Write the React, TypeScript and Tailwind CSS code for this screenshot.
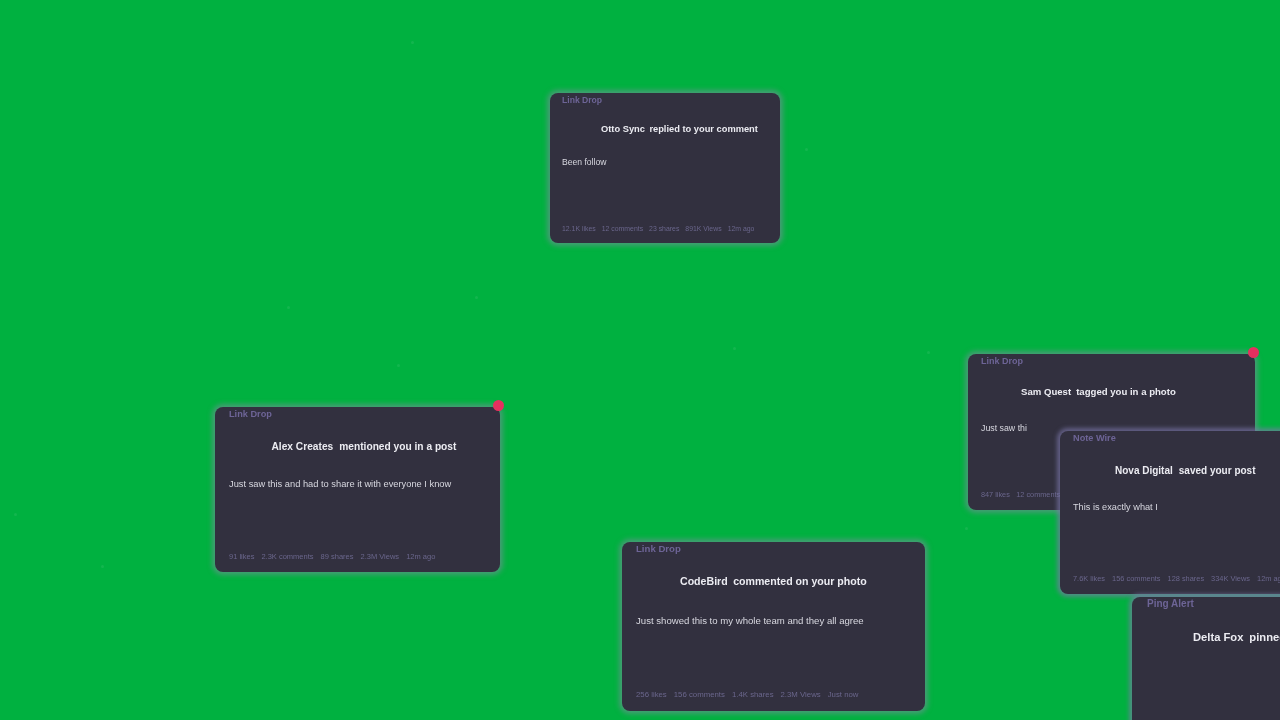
const cards = [
  {
    box: "left-[550px] top-[93px] w-[230px] h-[150px] z-10 shadow-[0_0_5px_3px_rgba(140,138,170,0.5)] px-3",
    brand: "Link Drop",
    brandCls: "text-[8.6px] h-[14px]",
    name: "Otto Sync",
    action: "replied to your comment",
    titleCls: "text-[9.3px] mt-[15px] pl-[39px] gap-[4.5px]",
    body: "Been follow",
    bodyCls: "text-[8.6px] mt-[19px]",
    meta: ["12.1K likes", "12 comments", "23 shares", "891K Views", "12m ago"],
    metaCls: "text-[6.9px] bottom-[9px] left-3 gap-[6px]",
    dot: false,
  },
  {
    box: "left-[215px] top-[407px] w-[285px] h-[165px] z-10 shadow-[0_0_5px_3px_rgba(140,138,170,0.5)] px-[14px]",
    brand: "Link Drop",
    brandCls: "text-[9.2px] h-[16px]",
    name: "Alex Creates",
    action: "mentioned you in a post",
    titleCls: "text-[10.2px] mt-[16.5px] pl-[42.5px] gap-[6px]",
    body: "Just saw this and had to share it with everyone I know",
    bodyCls: "text-[9.3px] mt-[23.5px]",
    meta: ["91 likes", "2.3K comments", "89 shares", "2.3M Views", "12m ago"],
    metaCls: "text-[7.5px] bottom-[10px] left-[14px] gap-[7px]",
    dot: true,
  },
  {
    box: "left-[622px] top-[542px] w-[303px] h-[169px] z-10 shadow-[0_0_5px_3px_rgba(140,138,170,0.5)] px-[14px]",
    brand: "Link Drop",
    brandCls: "text-[9.6px] h-[16px]",
    name: "CodeBird",
    action: "commented on your photo",
    titleCls: "text-[10.6px] mt-[16px] pl-[44px] gap-[5.5px]",
    body: "Just showed this to my whole team and they all agree",
    bodyCls: "text-[9.6px] mt-[26px]",
    meta: ["256 likes", "156 comments", "1.4K shares", "2.3M Views", "Just now"],
    metaCls: "text-[7.8px] bottom-[10px] left-[14px] gap-[7px]",
    dot: false,
  },
  {
    box: "left-[968px] top-[354px] w-[287px] h-[156px] z-10 shadow-[0_0_5px_3px_rgba(140,138,170,0.5)] px-[13px]",
    brand: "Link Drop",
    brandCls: "text-[9px] h-[15px]",
    name: "Sam Quest",
    action: "tagged you in a photo",
    titleCls: "text-[9.6px] mt-[15.5px] pl-[40px] gap-[5px]",
    body: "Just saw thi",
    bodyCls: "text-[8.8px] mt-[22px]",
    meta: ["847 likes", "12 comments", "23 shares", "891K Views", "12m ago"],
    metaCls: "text-[7.3px] bottom-[9px] left-[13px] gap-[6.5px]",
    dot: true,
  },
  {
    box: "left-[1060px] top-[431px] w-[300px] h-[163px] z-20 shadow-[0_0_4px_3px_rgba(125,120,170,0.65)] px-[13px]",
    brand: "Note Wire",
    brandCls: "text-[9.2px] h-[16px]",
    name: "Nova Digital",
    action: "saved your post",
    titleCls: "text-[10px] mt-[16.5px] pl-[42px] gap-[6px]",
    body: "This is exactly what I",
    bodyCls: "text-[9.2px] mt-[22.5px]",
    meta: ["7.6K likes", "156 comments", "128 shares", "334K Views", "12m ago"],
    metaCls: "text-[7.4px] bottom-[10px] left-[13px] gap-[7px]",
    dot: false,
  },
  {
    box: "left-[1132px] top-[597px] w-[300px] h-[170px] z-30 shadow-[0_0_4px_3px_rgba(125,120,170,0.65)] px-[15px]",
    brand: "Ping Alert",
    brandCls: "text-[10px] h-[12px]",
    name: "Delta Fox",
    action: "pinned your post",
    titleCls: "text-[11.2px] mt-[21px] pl-[46px] gap-[6px]",
    body: "",
    bodyCls: "text-[10px] mt-[27px]",
    meta: [],
    metaCls: "",
    dot: false,
  },
];

const specks = [
  "left-[411px] top-[41px]",
  "left-[805px] top-[148px]",
  "left-[287px] top-[306px]",
  "left-[475px] top-[296px]",
  "left-[397px] top-[364px]",
  "left-[733px] top-[347px]",
  "left-[927px] top-[351px]",
  "left-[14px] top-[513px]",
  "left-[101px] top-[565px]",
  "left-[965px] top-[527px]",
];

export default function App() {
  return (
    <div className="relative w-[1280px] h-[720px] overflow-hidden bg-[#00b140] font-['Liberation_Sans',Arial,sans-serif]">
      {specks.map((s) => (
        <div key={s} className={`absolute w-[3px] h-[3px] rounded-full bg-[#3fc46f] opacity-30 ${s}`} />
      ))}
      <div className="absolute inset-0 blur-[0.4px]">
        {cards.map((c) => (
          <div key={c.name} className={`absolute rounded-[8px] bg-[#32303f] ${c.box}`}>
            <div className={`font-bold leading-[14px] text-[#6d6496] ${c.brandCls}`}>{c.brand}</div>
            <div className={`flex font-bold leading-[14px] whitespace-nowrap text-[#ececf2] ${c.titleCls}`}>
              <span>{c.name}</span>
              <span>{c.action}</span>
            </div>
            {c.body && <div className={`leading-[14px] whitespace-nowrap text-[#d8d8e0] ${c.bodyCls}`}>{c.body}</div>}
            {c.meta.length > 0 && (
              <div className={`absolute flex whitespace-nowrap text-[#6a668c] ${c.metaCls}`}>
                {c.meta.map((m) => (
                  <span key={m}>{m}</span>
                ))}
              </div>
            )}
            {c.dot && <div className="absolute -top-[7px] -right-[4px] w-[11px] h-[11px] rounded-full bg-[#e5305f]" />}
          </div>
        ))}
      </div>
    </div>
  );
}
